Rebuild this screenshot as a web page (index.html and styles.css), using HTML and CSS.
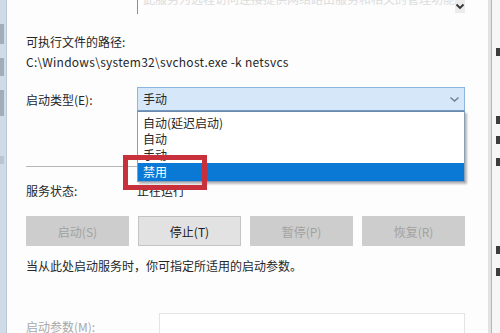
FILE: index.html
```html
<!DOCTYPE html>
<html lang="zh-CN">
<head>
<meta charset="utf-8">
<title>服务属性</title>
<link rel="stylesheet" href="styles.css">
</head>
<body>
<div class="screen">
  <div class="edge-left">
    <i class="m1"></i><i class="m2"></i><i class="m3"></i><i class="m4"></i>
  </div>
  <div class="dialog">
    <div class="desc">
      <div class="desc-box">
        <span class="desc-text">此服务为远程访问连接提供网络路由服务和相关的管理功能</span>
        <span class="scroll-btn">
          <svg width="10" height="7" viewBox="0 0 10 7"><path d="M1.5 1.5 L5 5 L8.5 1.5" fill="none" stroke="#333" stroke-width="1.8"/></svg>
        </span>
      </div>
    </div>
    <div class="label">可执行文件的路径:</div>
    <div class="path">C:\Windows\system32\svchost.exe -k netsvcs</div>
    <div class="row type-row">
      <div class="row-label">启动类型(E):</div>
      <div class="combo">
        <span class="combo-value">手动</span>
        <svg class="combo-arrow" width="11" height="7" viewBox="0 0 11 7"><path d="M1.5 1.5 L5.5 5 L9.5 1.5" fill="none" stroke="#6a7f95" stroke-width="1.4"/></svg>
        <ul class="dropdown">
          <li>自动(延迟启动)</li>
          <li>自动</li>
          <li>手动</li>
          <li class="sel">禁用</li>
        </ul>
        <div class="highlight"></div>
      </div>
    </div>
    <div class="sep"></div>
    <div class="row status-row">
      <div class="row-label">服务状态:</div>
      <div class="status-value">正在运行</div>
    </div>
    <div class="buttons">
      <div class="btn disabled">启动(S)</div>
      <div class="btn">停止(T)</div>
      <div class="btn disabled">暂停(P)</div>
      <div class="btn disabled">恢复(R)</div>
    </div>
    <p class="hint">当从此处启动服务时，你可指定所适用的启动参数。</p>
    <div class="row params-row">
      <div class="params-label">启动参数(M):</div>
      <div class="params-input"></div>
    </div>
  </div>
  <div class="edge-right">
    <i class="r1"></i><i class="r2"></i><i class="r3"></i><i class="r4"></i><i class="r5"></i><i class="r6"></i>
  </div>
</div>
</body>
</html>
```

FILE: styles.css
```css
html, body {
  margin: 0;
  padding: 0;
}

body {
  font-family: "Noto Sans CJK SC", "Noto Sans", sans-serif;
  font-size: 12px;
  color: #262626;
  background: #fff;
}

.screen {
  display: flex;
  width: 500px;
  height: 333px;
  overflow: hidden;
  background: #fdfdfd;
}

/* left edge of a window behind */
.edge-left {
  width: 7px;
  flex: none;
  background: #cfdbe7;
  border-right: 1px solid #b9c8d8;
  display: flex;
  flex-direction: column;
  align-items: flex-start;
  padding-top: 24px;
  box-sizing: border-box;
}
.edge-left i {
  display: block;
  flex: none;
  width: 4px;
  background: #8e9aa8;
  opacity: 0.7;
}
.edge-left .m1 { height: 20px; }
.edge-left .m2 { height: 18px; margin-top: 14px; }
.edge-left .m3 { height: 26px; margin-top: 14px; }
.edge-left .m4 { height: 8px; margin-top: 40px; opacity: 0.35; }

/* right edge */
.edge-right {
  width: 12px;
  flex: none;
  box-sizing: border-box;
  border-left: 3px solid #e2e2e2;
  background: #f6f6f6;
  box-shadow: inset 1px 0 0 #b8b8b8;
  display: flex;
  flex-direction: column;
  align-items: flex-end;
  padding-top: 48px;
}
.edge-right i {
  display: block;
  flex: none;
  width: 4px;
  height: 8px;
  background: #3c3c3c;
}
.edge-right .r2 { margin-top: 60px; }
.edge-right .r3 { margin-top: 12px; }
.edge-right .r4 { margin-top: 14px; }
.edge-right .r5 { margin-top: 80px; }
.edge-right .r6 { margin-top: 14px; }

.dialog {
  flex: 1;
  display: flex;
  flex-direction: column;
  padding: 0 23px 0 19px;
  min-width: 0;
}
.dialog > * {
  flex: none;
}

/* description box (scrolled, only bottom visible) */
.desc {
  height: 14px;
  padding-left: 111px;
}
.desc-box {
  height: 14px;
  border-left: 1px solid #8c8c8c;
  display: flex;
  justify-content: space-between;
  overflow: hidden;
}
.desc-text {
  margin-top: -9px;
  padding-left: 5px;
  color: #dcdcdc;
  line-height: 16px;
  white-space: nowrap;
}
.scroll-btn {
  width: 16px;
  height: 13px;
  background: #ececec;
  display: flex;
  align-items: center;
  justify-content: center;
  margin-right: 2px;
}

.label {
  margin-top: 20px;
  line-height: 16px;
}
.path {
  margin-top: 4px;
  line-height: 16px;
  white-space: nowrap;
  letter-spacing: 0.28px;
}

.row {
  display: flex;
  align-items: center;
}
.row-label {
  width: 111px;
  flex: none;
}

.type-row {
  margin-top: 17px;
}
.combo {
  position: relative;
  flex: 1;
  height: 24px;
  box-sizing: border-box;
  background: #d5e7f8;
  border: 1px solid #8cb6df;
  border-bottom-color: #6f9ac4;
  display: flex;
  align-items: center;
  justify-content: space-between;
  padding: 0 4px 0 5px;
}
.combo-value {
  line-height: 16px;
}

.dropdown {
  position: absolute;
  left: -1px;
  right: -1px;
  top: 23px;
  margin: 0;
  padding: 3px 0 0;
  list-style: none;
  background: #fff;
  border: 1px solid #8a9db3;
  border-top-color: #6f8aa8;
  box-shadow: 2px 2px 2px rgba(0, 0, 0, 0.28);
  z-index: 2;
}
.dropdown li {
  height: 16px;
  line-height: 16px;
  padding-left: 5px;
}
.dropdown li.sel {
  height: 18px;
  line-height: 18px;
  background: #0a79d6;
  color: #fff;
}

.highlight {
  position: absolute;
  left: -15px;
  top: 67px;
  width: 84px;
  height: 35px;
  box-sizing: border-box;
  border: 5px solid #c8303b;
  z-index: 3;
}

.sep {
  margin-top: 55px;
  height: 1px;
  background: #b4b4b4;
}

.status-row {
  margin-top: 16px;
  line-height: 16px;
}

.buttons {
  margin-top: 17px;
  display: grid;
  grid-template-columns: repeat(4, 1fr);
  column-gap: 9px;
}
.btn {
  height: 30px;
  box-sizing: border-box;
  display: flex;
  align-items: center;
  justify-content: center;
  background: #e2e2e2;
  border: 1px solid #c4c4c4;
  color: #1a1a1a;
}
.btn.disabled {
  background: #cdcdcd;
  border-color: #cdcdcd;
  color: #a2a2a2;
}

.hint {
  margin: 12px 0 0;
  line-height: 16px;
  white-space: nowrap;
}

.params-row {
  margin-top: 39px;
  align-items: flex-start;
}
.params-label {
  width: 133px;
  flex: none;
  padding-top: 6px;
  line-height: 16px;
  color: #a8a8a8;
}
.params-input {
  flex: 1;
  height: 24px;
  border: 1px solid #e4e4e4;
  background: #fff;
}
```
